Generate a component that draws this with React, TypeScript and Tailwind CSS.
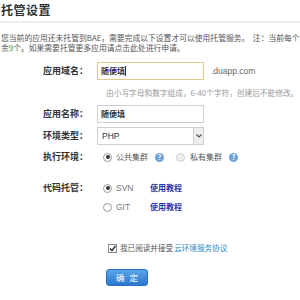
import React from "react";

function Help() {
  return (
    <span className="inline-flex w-[9px] h-[9px] rounded-full bg-[#6fa3d8] text-white text-[7px] leading-none items-center justify-center font-bold ml-[7px]">?</span>
  );
}

function Radio({ checked }: { checked?: boolean }) {
  return (
    <span className="inline-flex w-[9px] h-[9px] rounded-full border border-[#999] bg-white items-center justify-center mr-[4px]">
      {checked && <span className="w-[4px] h-[4px] rounded-full bg-[#333]" />}
    </span>
  );
}

function Label({ children }: { children: React.ReactNode }) {
  return <div className="w-[97px] shrink-0 text-right pr-[9px] font-bold text-[#333] text-[9px]">{children}</div>;
}

const latin = { fontFamily: '"Liberation Sans",sans-serif' };

export default function App() {
  return (
    <div className="w-[300px] h-[300px] bg-white overflow-hidden text-[#333]" style={{ fontFamily: '"Noto Sans CJK SC","Liberation Sans",sans-serif' }}>
      <div className="pl-[1px] pt-[3px] text-[12px] font-bold leading-[14px] text-[#333] tracking-[0.5px]">托管设置</div>
      <div className="mt-[4px] h-[2px] bg-[#eeeeee]" />
      <div className="mt-[10px] pl-[1px] text-[7.8px] leading-[10px] whitespace-nowrap text-[#555]">
        <div>您当前的应用还未托管到BAE，需要完成以下设置才可以使用托管服务。{"\u00a0\u00a0"}注：当前每个用户只可</div>
        <div>余<span className="text-[#3a9a3a]">9</span>个。如果需要托管更多应用请点击此处进行申请。</div>
      </div>
      <div className="mt-[9px] text-[9px]">
        <div className="flex items-center h-[18px]">
          <Label>应用域名：</Label>
          <div className="w-[107px] h-[18px] border border-[#e2c98a] px-[3px] flex items-center text-[8px] font-bold">随便填<span className="w-px h-[10px] bg-[#333]" /></div>
          <span className="ml-[7px] text-[8.5px] text-[#666]" style={latin}>.duapp.com</span>
        </div>
        <div className="ml-[106px] mt-[7px] text-[7.7px] leading-[12px] text-[#999] whitespace-nowrap">由小写字母和数字组成，6-40个字符，创建后不能修改。</div>
        <div className="flex items-center h-[18px] mt-[6px]">
          <Label>应用名称：</Label>
          <div className="w-[107px] h-[18px] border border-[#cfcfcf] px-[3px] flex items-center text-[8px] font-bold">随便填</div>
        </div>
        <div className="flex items-center h-[18px] mt-[4px]">
          <Label>环境类型：</Label>
          <div className="w-[107px] h-[18px] border border-[#cfcfcf] flex items-center text-[8.5px]">
            <span className="flex-1 pl-[4px] text-[#333]" style={latin}>PHP</span>
            <span className="w-[10px] h-full bg-[#eeeeee] border-l border-[#cfcfcf] flex items-center justify-center">
              <svg width="6" height="4" viewBox="0 0 6 4"><path d="M0.5 0.5 L3 3 L5.5 0.5" stroke="#555" strokeWidth="1.2" fill="none" /></svg>
            </span>
          </div>
        </div>
        <div className="flex items-center h-[18px] mt-[3px]">
          <Label>执行环境：</Label>
          <div className="flex items-center pl-[6px] text-[8px] text-[#555]">
            <Radio checked />公共集群<Help />
            <span className="ml-[12px] flex items-center"><span className="inline-flex w-[9px] h-[9px] rounded-full border border-[#ccc] bg-[#f0f0f0] mr-[5px]" />私有集群<Help /></span>
          </div>
        </div>
        <div className="flex items-center h-[18px] mt-[13px]">
          <Label>代码托管：</Label>
          <div className="flex items-center pl-[6px] text-[8px] text-[#777]">
            <Radio checked /><span className="w-[34px] text-[8.5px]" style={latin}>SVN</span>
            <span className="text-[#3333a6] font-bold">使用教程</span>
          </div>
        </div>
        <div className="flex items-center h-[18px] mt-[1px]">
          <div className="w-[97px] shrink-0" />
          <div className="flex items-center pl-[6px] text-[8px] text-[#777]">
            <Radio /><span className="w-[34px] text-[8.5px]" style={latin}>GIT</span>
            <span className="text-[#3333a6] font-bold">使用教程</span>
          </div>
        </div>
        <div className="flex items-center h-[14px] mt-[25px] ml-[106px] pl-[2px] text-[7.6px] text-[#555]">
          <span className="inline-flex w-[9px] h-[9px] border border-[#888] bg-white items-center justify-center mr-[3px]">
            <svg width="7" height="7" viewBox="0 0 7 7"><path d="M1 3.5 L3 5.5 L6.5 1" stroke="#222" strokeWidth="1.3" fill="none" /></svg>
          </span>
          我已阅读并接受<span className="text-[#2a8cc4] ml-[1px]">云环境服务协议</span>
        </div>
        <div className="ml-[106px] mt-[14px] w-[42px] h-[17px] rounded-[3px] bg-gradient-to-b from-[#5aa5e8] to-[#2a78cf] border border-[#2a6fbf] text-white text-[8.5px] flex items-center justify-center tracking-[5px] pl-[5px]">确定</div>
      </div>
    </div>
  );
}
